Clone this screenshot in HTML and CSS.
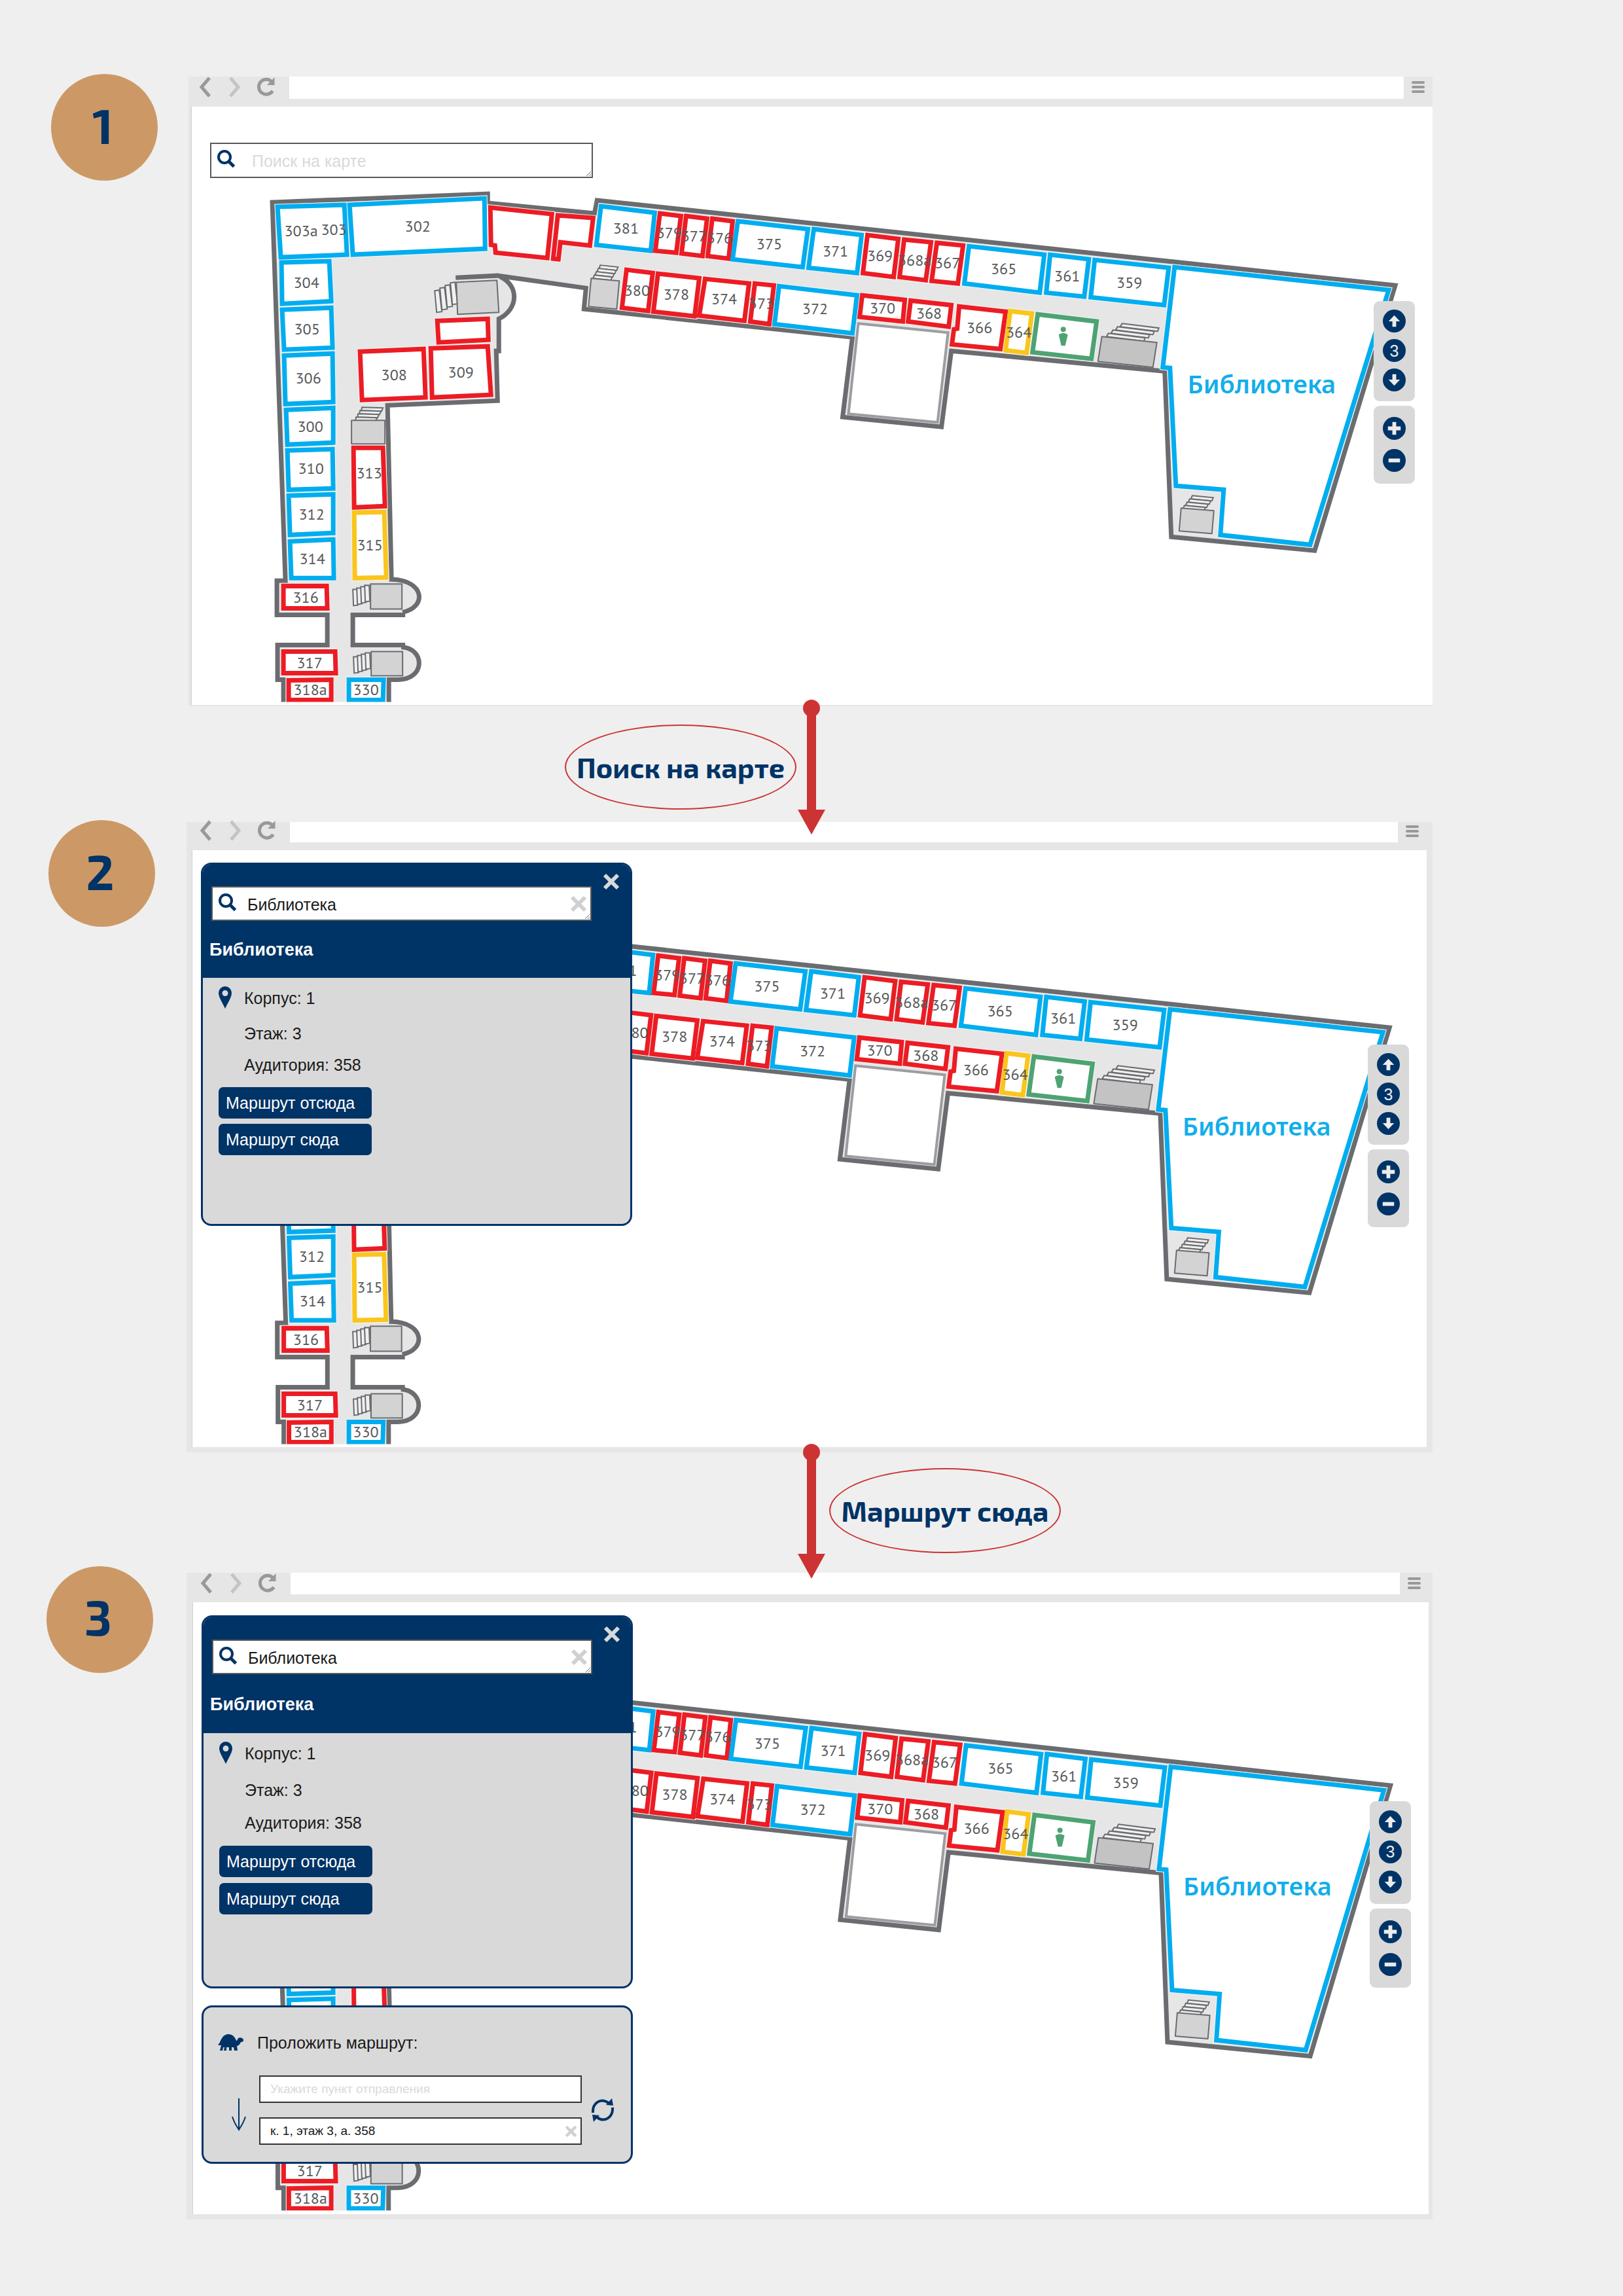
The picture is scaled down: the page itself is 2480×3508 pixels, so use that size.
FILE: index.html
```
<!DOCTYPE html>
<html lang="ru">
<head>
<meta charset="utf-8">
<meta name="viewport" content="width=device-width, initial-scale=1">
<title>Поиск на карте</title>
<link rel="stylesheet" href="styles.css">
</head>
<body>
<svg class="sprite" aria-hidden="true">
  <symbol id="i-back" viewBox="0 0 20 32"><path d="M17 2 L5 16 L17 30" fill="none" stroke="currentColor" stroke-width="5"/></symbol>
  <symbol id="i-next" viewBox="0 0 20 32"><path d="M3 2 L15 16 L3 30" fill="none" stroke="currentColor" stroke-width="5"/></symbol>
  <symbol id="i-reload" viewBox="0 0 30 32"><path d="M24.500 8 A11.500 11.500 0 1 0 25.500 22" fill="none" stroke="currentColor" stroke-width="5"/><path d="M28.500 1 V13 H17 Z" fill="currentColor"/></symbol>
  <symbol id="i-menu" viewBox="0 0 20 20"><path d="M2 3 H18 M2 10 H18 M2 17 H18" stroke="currentColor" stroke-width="4" stroke-linecap="round"/></symbol>
  <symbol id="i-search" viewBox="0 0 28 28"><circle cx="11" cy="11" r="9" fill="none" stroke="currentColor" stroke-width="4"/><path d="M17 17 L25.500 25.500" stroke="currentColor" stroke-width="5"/></symbol>
  <symbol id="i-cross" viewBox="0 0 26 26"><path d="M3 3 L23 23 M23 3 L3 23" stroke="currentColor" stroke-width="6"/></symbol>
  <symbol id="i-pin" viewBox="0 0 20 34"><path fill-rule="evenodd" fill="currentColor" d="M10 0 A10 10 0 0 1 20 10 C20 17 14 25 10 34 C6 25 0 17 0 10 A10 10 0 0 1 10 0 Z M10 6 A4.500 4.500 0 1 0 10 15 A4.500 4.500 0 1 0 10 6 Z"/></symbol>
  <symbol id="i-up" viewBox="0 0 36 36"><path fill="currentColor" d="M18 9 L27 18.500 H21 V27 H15 V18.500 H9 Z"/></symbol>
  <symbol id="i-down" viewBox="0 0 36 36"><path fill="currentColor" d="M18 27 L27 17.500 H21 V9 H15 V17.500 H9 Z"/></symbol>
  <symbol id="i-plus" viewBox="0 0 36 36"><path d="M8 18 H28 M18 8 V28" stroke="currentColor" stroke-width="6"/></symbol>
  <symbol id="i-minus" viewBox="0 0 36 36"><path d="M9 18 H27" stroke="currentColor" stroke-width="6"/></symbol>
  <symbol id="i-turtle" viewBox="0 0 40 26"><path fill="currentColor" d="M0 16 C3 14 3 11 5 8 C8 2 12 0 16 0 C22 0 26 4 28 10 C30 10 30 7 31 6 C34 4 39 6 39 9 C39 11 38 12 35 12 C34 15 31 18 29 18 L30 25 H25 L24 20 H21 L21 25 H17 L17 20 H13 L13 25 H9 L10 20 H8 L7 25 H3 L5 17 C3 17 1 17 0 16 Z"/></symbol>
  <symbol id="i-arrow" viewBox="0 0 24 50"><path d="M12 0 V47 M2 28 C5 38 9 43 12 48 C15 43 19 38 22 28" fill="none" stroke="currentColor" stroke-width="2"/></symbol>
  <symbol id="i-swap" viewBox="0 0 36 36"><path d="M3 22 C2 8 14 -2 27 7 M33 14 C34 28 22 38 9 29" fill="none" stroke="currentColor" stroke-width="4"/><path fill="currentColor" d="M32 0 L34 11 L23 10 Z M4 36 L2 25 L13 26 Z"/></symbol>
</svg>

<main class="board">
  <section class="step step-1">
    <div class="badge">1</div>
    <div class="browser">
      <div class="toolbar">
        <div class="nav-icons"><svg class="ico-nav"><use href="#i-back"/></svg><svg class="ico-nav dim"><use href="#i-next"/></svg><svg class="ico-reload"><use href="#i-reload"/></svg></div>
        <div class="address"></div>
        <svg class="ico-menu"><use href="#i-menu"/></svg>
      </div>
      <div class="screen">
        <svg class="map" data-map="1" viewBox="0 0 1895 914" role="img" aria-label="План третьего этажа"></svg>
        <div class="search search-free">
          <svg class="ico-search"><use href="#i-search"/></svg>
          <textarea class="search-field" rows="1" placeholder="Поиск на карте" aria-label="Поиск на карте"></textarea>
        </div>
        <div class="controls">
          <div class="control-group floors">
            <button class="round" aria-label="Этаж выше"><svg><use href="#i-up"/></svg></button>
            <button class="round">3</button>
            <button class="round" aria-label="Этаж ниже"><svg><use href="#i-down"/></svg></button>
          </div>
          <div class="control-group zoom">
            <button class="round" aria-label="Приблизить"><svg><use href="#i-plus"/></svg></button>
            <button class="round" aria-label="Отдалить"><svg><use href="#i-minus"/></svg></button>
          </div>
        </div>
      </div>
    </div>
  </section>

  <div class="link link-left">
    <p class="link-label">Поиск на карте</p>
    <svg class="link-arrow" viewBox="0 0 42 206"><circle cx="21" cy="13" r="13"/><path d="M14 13 H28 V168 H42 L21 206 L0 168 H14 Z"/></svg>
  </div>

  <section class="step step-2">
    <div class="badge">2</div>
    <div class="browser">
      <div class="toolbar">
        <div class="nav-icons"><svg class="ico-nav"><use href="#i-back"/></svg><svg class="ico-nav dim"><use href="#i-next"/></svg><svg class="ico-reload"><use href="#i-reload"/></svg></div>
        <div class="address"></div>
        <svg class="ico-menu"><use href="#i-menu"/></svg>
      </div>
      <div class="screen">
        <svg class="map" data-map="2" viewBox="0 0 1885 911" role="img" aria-label="План третьего этажа"></svg>
        <div class="panels">
          <div class="panel">
            <header class="panel-head">
              <button class="close" aria-label="Закрыть"><svg class="ico-cross"><use href="#i-cross"/></svg></button>
              <div class="search">
                <svg class="ico-search"><use href="#i-search"/></svg>
                <textarea class="search-field" rows="1" aria-label="Поиск на карте">Библиотека</textarea>
                <button class="clear" aria-label="Очистить"><svg class="ico-cross"><use href="#i-cross"/></svg></button>
              </div>
              <h2 class="panel-title">Библиотека</h2>
            </header>
            <div class="panel-body">
              <ul class="facts">
                <li><svg class="ico-pin"><use href="#i-pin"/></svg>Корпус: 1</li>
                <li>Этаж: 3</li>
                <li>Аудитория: 358</li>
              </ul>
              <button class="action">Маршрут отсюда</button>
              <button class="action">Маршрут сюда</button>
            </div>
          </div>
        </div>
        <div class="controls">
          <div class="control-group floors">
            <button class="round" aria-label="Этаж выше"><svg><use href="#i-up"/></svg></button>
            <button class="round">3</button>
            <button class="round" aria-label="Этаж ниже"><svg><use href="#i-down"/></svg></button>
          </div>
          <div class="control-group zoom">
            <button class="round" aria-label="Приблизить"><svg><use href="#i-plus"/></svg></button>
            <button class="round" aria-label="Отдалить"><svg><use href="#i-minus"/></svg></button>
          </div>
        </div>
      </div>
    </div>
  </section>

  <div class="link link-right">
    <p class="link-label">Маршрут сюда</p>
    <svg class="link-arrow" viewBox="0 0 42 206"><circle cx="21" cy="13" r="13"/><path d="M14 13 H28 V168 H42 L21 206 L0 168 H14 Z"/></svg>
  </div>

  <section class="step step-3">
    <div class="badge">3</div>
    <div class="browser">
      <div class="toolbar">
        <div class="nav-icons"><svg class="ico-nav"><use href="#i-back"/></svg><svg class="ico-nav dim"><use href="#i-next"/></svg><svg class="ico-reload"><use href="#i-reload"/></svg></div>
        <div class="address"></div>
        <svg class="ico-menu"><use href="#i-menu"/></svg>
      </div>
      <div class="screen">
        <svg class="map" data-map="3" viewBox="0 0 1888 935" role="img" aria-label="План третьего этажа"></svg>
        <div class="panels">
          <div class="panel">
            <header class="panel-head">
              <button class="close" aria-label="Закрыть"><svg class="ico-cross"><use href="#i-cross"/></svg></button>
              <div class="search">
                <svg class="ico-search"><use href="#i-search"/></svg>
                <textarea class="search-field" rows="1" aria-label="Поиск на карте">Библиотека</textarea>
                <button class="clear" aria-label="Очистить"><svg class="ico-cross"><use href="#i-cross"/></svg></button>
              </div>
              <h2 class="panel-title">Библиотека</h2>
            </header>
            <div class="panel-body">
              <ul class="facts">
                <li><svg class="ico-pin"><use href="#i-pin"/></svg>Корпус: 1</li>
                <li>Этаж: 3</li>
                <li>Аудитория: 358</li>
              </ul>
              <button class="action">Маршрут отсюда</button>
              <button class="action">Маршрут сюда</button>
            </div>
          </div>
          <form class="panel route">
            <h3 class="route-title"><svg class="ico-turtle"><use href="#i-turtle"/></svg>Проложить маршрут:</h3>
            <div class="route-grid">
              <svg class="ico-arrow"><use href="#i-arrow"/></svg>
              <div class="route-fields">
                <input class="route-input" type="text" placeholder="Укажите пункт отправления" aria-label="Пункт отправления">
                <div class="route-target">
                  <input class="route-input" type="text" value="к. 1, этаж 3, а. 358" aria-label="Пункт назначения">
                  <button type="button" class="clear" aria-label="Очистить"><svg class="ico-cross"><use href="#i-cross"/></svg></button>
                </div>
              </div>
              <button type="button" class="swap" aria-label="Поменять местами"><svg><use href="#i-swap"/></svg></button>
            </div>
          </form>
        </div>
        <div class="controls">
          <div class="control-group floors">
            <button class="round" aria-label="Этаж выше"><svg><use href="#i-up"/></svg></button>
            <button class="round">3</button>
            <button class="round" aria-label="Этаж ниже"><svg><use href="#i-down"/></svg></button>
          </div>
          <div class="control-group zoom">
            <button class="round" aria-label="Приблизить"><svg><use href="#i-plus"/></svg></button>
            <button class="round" aria-label="Отдалить"><svg><use href="#i-minus"/></svg></button>
          </div>
        </div>
      </div>
    </div>
  </section>
</main>
<script src="map.js"></script>
</body>
</html>
```
FILE: styles.css
```
* { box-sizing: border-box; }

:root {
  --navy: #003366;
  --panel: #d9d9d9;
  --chrome: #e6e6e6;
  --accent: #cc3333;
}

body {
  margin: 0;
  background: #efefef;
  font-family: "Liberation Sans", Arial, sans-serif;
  font-size: 25px;
  line-height: 28px;
  color: #1a1a1a;
}

button, input, textarea { font: inherit; color: inherit; margin: 0; padding: 0; border: 0; border-radius: 0; }
button { background: none; display: grid; place-items: center; cursor: pointer; }
svg { display: block; }
.sprite { display: none; }

.board { padding: 113px 291px 100px 0; }

/* Steps */
.step { display: grid; align-items: start; }
.step-1 { padding-left: 78px; grid-template-columns: 210px 1fr; }
.step-2 { padding-left: 74px; grid-template-columns: 211px 1fr; }
.step-3 { padding-left: 71px; grid-template-columns: 214px 1fr; }

.badge {
  width: 163px;
  height: 163px;
  padding: 0 5px 8px 0;
  border-radius: 50%;
  background: #cc9966;
  color: var(--navy);
  display: grid;
  place-items: center;
  font: 700 74px/80px "Exo 2", "Noto Sans", sans-serif;
}

.browser { background: var(--chrome); }
.step-1 .browser { margin-top: 4px; padding: 0 0 2px 5px; }
.step-2 .browser { margin-top: 3px; padding: 0 9px 8px 9px; }
.step-3 .browser { margin-top: 10px; padding: 0 6px 8px 10px; }

.toolbar { display: flex; height: 46px; color: #999; }
.step-2 .toolbar { height: 43px; }
.step-3 .toolbar { height: 45px; }
.nav-icons { width: 149px; display: flex; gap: 26px; padding-left: 10px; }
.ico-nav { width: 20px; height: 32px; }
.ico-nav.dim { color: #c4c4c4; }
.ico-reload { width: 30px; height: 32px; margin-left: -4px; }
.address { flex: 1; background: #fff; margin-bottom: 12px; }
.ico-menu { width: 20px; height: 20px; margin: 6px 12px 0 12px; }
.step-2 .nav-icons { margin-top: -3px; }
.step-2 .ico-menu { margin-top: 4px; }

.screen { position: relative; background: #fff; box-shadow: -1px 0 0 #d0d0d0; }
.map { width: 100%; height: auto; }

/* Floor plan */
.floor { fill: var(--chrome); stroke: none; }
.wall { fill: none; stroke: #6a6c70; stroke-width: 7; }
.court { fill: #fff; stroke: #9b9da0; stroke-width: 4; }
.room { fill: #fff; stroke-width: 7; }
.halo { fill: none; stroke: #f6f6f6; stroke-width: 9; }
.blue { stroke: #00adef; }
.red { stroke: #ec1c24; }
.yellow { stroke: #fac51c; }
.green { stroke: #4ea373; }
.stair { fill: #d3d3d3; stroke: #6a6c70; stroke-width: 2; stroke-linejoin: round; }
.stair.dark { fill: #c3c3c3; }
.tread { fill: #f0f0f0; stroke: #6a6c70; stroke-width: 2; }
.person { fill: #4ea373; }
.number { font: 24px "PT Sans", "Noto Sans", sans-serif; fill: #58595b; text-anchor: middle; }
.hall { font: 600 38px "Noto Sans", sans-serif; fill: #12aeea; text-anchor: middle; }

/* Search box */
.search { position: relative; width: 581px; height: 53px; }
.search-free { position: absolute; left: 28px; top: 55px; width: 585px; height: 54px; }
.search-field {
  display: block;
  width: 100%;
  height: 100%;
  padding: 12px 60px 8px 53px;
  border: 2px solid #58595b;
  background: #fff;
  overflow: hidden;
  white-space: nowrap;
  outline: 0;
}
.search-free .search-field { padding-left: 62px; }
.search-field::placeholder, .route-input::placeholder { color: #d9d9d9; opacity: 1; }
.ico-search { position: absolute; left: 11px; top: 11px; width: 28px; height: 28px; color: var(--navy); }
.ico-cross { width: 26px; height: 26px; }
.clear { position: absolute; right: 7px; top: 14px; color: #d0d0d0; }

/* Panels */
.panels { position: absolute; left: 13px; top: 19px; width: 659px; display: grid; gap: 26px; }
.panel { background: var(--panel); border: 3px solid var(--navy); border-radius: 16px; overflow: hidden; position: relative; }
.panel-head { background: var(--navy); color: #fff; height: 173px; padding: 33px 0 0 13px; }
.panel-head .search { color: #1a1a1a; }
.close { position: absolute; right: 16px; top: 13px; color: var(--panel); }
.panel-title { margin: 28px 0 0 -3px; font: 700 27px/32px "Liberation Sans", Arial, sans-serif; }
.panel-body { height: 376px; padding: 17px 24px 0; display: flex; flex-direction: column; align-items: flex-start; gap: 8px; }
.facts { list-style: none; margin: 0; padding: 0 0 0 39px; display: grid; grid-template-rows: 54px 48px 40px; position: relative; }
.ico-pin { position: absolute; left: 0; top: -4px; width: 20px; height: 34px; color: var(--navy); }
.action { width: 234px; height: 48px; border-radius: 7px; background: var(--navy); color: #fff; justify-items: start; padding-left: 11px; white-space: nowrap; }

.step-3 .panels { top: 20px; }
.step-3 .panel-head { height: 177px; padding-top: 34px; }
.step-3 .panel-title { margin-top: 30px; }
.step-3 .panel-body { height: 387px; gap: 9px; }
.step-3 .facts { grid-template-rows: 56px 50px 40px; }

/* Route form */
.route { padding: 40px 25px 26px 22px; }
.route-title { display: flex; align-items: center; gap: 20px; margin: 0 0 36px; font-weight: 400; font-size: 25px; line-height: 28px; }
.ico-turtle { width: 40px; height: 26px; }
.route-title svg, .route .ico-arrow, .swap { color: var(--navy); }
.route-grid { display: flex; align-items: center; gap: 14px; padding-left: 20px; }
.ico-arrow { width: 24px; height: 50px; margin: 14px 5px 0 0; }
.route-fields { flex: 1; display: grid; gap: 22px; }
.route-target { position: relative; }
.route-input { display: block; width: 100%; height: 42px; padding: 0 40px 0 15px; border: 2px solid #333; background: #fff; font-size: 19px; outline: 0; }
.route-target .clear { right: 7px; top: 12px; }
.route-target .ico-cross { width: 19px; height: 19px; }
.swap, .swap svg { width: 36px; height: 36px; }

/* Floor and zoom controls */
.controls { position: absolute; right: 27px; top: 297px; display: grid; gap: 7px; }
.step-3 .controls { top: 304px; }
.control-group { width: 63px; background: var(--panel); border-radius: 9px; display: flex; flex-direction: column; align-items: center; }
.floors { padding: 13px 0 15px; gap: 10px; }
.zoom { padding: 17px 0 18px; gap: 14px; }
.step-3 .floors { padding: 14px 0 16px; gap: 11px; }
.step-3 .zoom { padding: 18px 0; gap: 15px; }
.round { width: 35px; height: 35px; border-radius: 50%; background: var(--navy); color: #ececec; }
.round svg { width: 35px; height: 35px; }

/* Transitions between steps */
.link { position: relative; z-index: 1; height: 174px; margin-right: -291px; padding-top: 28px; display: grid; grid-template-columns: 1fr 1fr; align-items: start; }
.link-label {
  margin: 0;
  width: 354px;
  height: 130px;
  border: 2px solid var(--accent);
  border-radius: 50%;
  display: grid;
  place-items: center;
  color: var(--navy);
  white-space: nowrap;
  font: 700 43px/48px "Exo 2", "Noto Sans", sans-serif;
}
.link-left .link-label { justify-self: end; margin-right: 23px; }
.link-right { padding-top: 24px; }
.link-right .link-label { grid-column: 2; margin-left: 27px; }
.link-arrow { position: absolute; left: 50%; top: -10px; width: 42px; height: 206px; margin-left: -21px; fill: var(--accent); }
.link-right .link-arrow { top: -13px; }
```
FILE: map.js
```
// Floor plan geometry: every point is an x,y pair in plan units.
const walls = [
  'M433 1073 V1038 H424 V985 H500 V939 H423 V887 H436 L416 309 L745 296 V310 L908 326 L912 306 L2131 436 L2008 841 L1789 820 L1779 567 L1453 536 L1438 652 L1287 637 L1302 515 L892 472 L895 440 L760 421 L696 424',
  'M763 422 C794 436 792 472 762 487 V536 H758 L760 612 L592 619 L598 885 C650 886 652 928 615 935 M619 939 H539 V985 H619 M613 988 C650 990 650 1038 608 1038 H594 V1073'
];
const floor = 'M433 1073 V1038 H424 V985 H500 V939 H423 V887 H436 L416 309 L745 296 V310 L908 326 L912 306 L2131 436 L2008 841 L1789 820 L1779 567 L1453 536 L1438 652 L1287 637 L1302 515 L892 472 L895 440 L763 422 C794 436 792 472 762 487 V536 H758 L760 612 L592 619 L598 885 C650 886 652 928 615 935 V939 H539 V985 H613 V988 C650 990 650 1038 608 1038 H594 V1073 Z';
const court = '1311,494 1448,508 1432,645 1296,632';

const rooms = [
  ['blue', '424,316 526,313 530,389 429,393', ['303а', 460, 352], ['303', 510, 350]],
  ['blue', '534,313 740,303 741,380 539,389', ['302', 638, 345]],
  ['blue', '430,401 503,399 506,460 431,464', ['304', 468, 431]],
  ['blue', '431,473 506,470 508,531 434,534', ['305', 469, 502]],
  ['blue', '434,543 508,540 509,614 436,617', ['306', 471, 577]],
  ['blue', '437,626 509,623 509,676 439,679', ['300', 474, 651]],
  ['blue', '439,688 508,686 509,746 441,748', ['310', 475, 715]],
  ['blue', '441,757 509,755 509,814 443,817', ['312', 476, 785]],
  ['blue', '443,827 509,824 510,883 445,883', ['314', 477, 853]],
  ['red', '433,895 499,895 500,929 433,929', ['316', 467, 912]],
  ['red', '433,995 512,995 513,1028 433,1028', ['317', 473, 1012]],
  ['red', '441,1039 506,1038 506,1069 441,1069', ['318а', 474, 1053]],
  ['blue', '533,1038 586,1038 585,1069 533,1069', ['330', 559, 1053]],
  ['red', '749,317 843,327 836,394 757,386 756,375 750,374'],
  ['red', '852,329 906,333 901,375 856,370 853,396 845,395'],
  ['red', '668,490 745,487 746,519 670,523'],
  ['red', '550,537 647,533 650,607 553,611', ['308', 602, 572]],
  ['red', '658,532 745,529 750,603 660,607', ['309', 704, 568]],
  ['red', '540,684 585,684 588,773 541,775', ['313', 564, 722]],
  ['yellow', '541,783 587,782 590,882 542,883', ['315', 565, 832]],
  ['blue', '918,315 1000,325 994,383 911,374', ['381', 956, 348]],
  ['red', '1008,326 1040,330 1033,386 1001,383', ['379', 1022, 355]],
  ['red', '1048,330 1080,334 1073,391 1041,387', ['377', 1060, 360]],
  ['red', '1088,334 1119,338 1113,395 1081,391', ['376', 1099, 363]],
  ['blue', '1127,338 1234,350 1226,408 1119,396', ['375', 1175, 372]],
  ['blue', '1243,350 1316,359 1309,417 1235,409', ['371', 1276, 383]],
  ['red', '1325,359 1372,365 1365,423 1318,417', ['369', 1344, 390]],
  ['red', '1381,366 1422,370 1414,428 1374,423', ['368а', 1397, 397]],
  ['red', '1431,371 1471,375 1463,433 1423,429', ['367', 1447, 401]],
  ['blue', '1480,376 1595,389 1588,447 1473,433', ['365', 1533, 410]],
  ['blue', '1604,389 1663,396 1656,453 1598,447', ['361', 1630, 421]],
  ['blue', '1672,397 1785,409 1778,466 1666,454', ['359', 1725, 431]],
  ['red', '957,412 997,417 990,475 950,470', ['380', 973, 443]],
  ['red', '1005,418 1068,425 1061,483 998,476', ['378', 1033, 449]],
  ['red', '1077,426 1144,433 1137,490 1068,482', ['374', 1106, 456]],
  ['red', '1153,433 1182,436 1175,495 1146,491', ['373', 1163, 463]],
  ['blue', '1190,437 1309,451 1302,509 1183,495', ['372', 1245, 471]],
  ['red', '1317,451 1382,458 1379,491 1313,484', ['370', 1348, 470]],
  ['red', '1391,459 1453,466 1449,499 1387,491', ['368', 1419, 478]],
  ['red', '1465,468 1536,476 1528,533 1454,526 1457,503 1462,502', ['366', 1496, 500]],
  ['yellow', '1543,475 1576,479 1568,539 1536,535', ['364', 1556, 507]],
  ['green', '1585,480 1675,491 1667,548 1577,538'],
  ['blue', '1794,408 2121,443 2001,832 1864,817 1869,748 1796,742 1787,562 1776,561']
];

// Landing, first tread, offset between treads.
const stairs = [
  ['697,431 759,428 762,477 699,480', '664,444 671,443 675,476 667,477', 8, -4],
  ['903,425 946,429 942,472 899,468', '917,405 944,408 942,413 915,410', -3, 5],
  ['537,642 588,642 588,678 537,678', '553,622 585,623 583,628 552,627', -3, 5],
  ['566,892 614,892 614,930 566,930', '539,900 546,900 547,924 540,925', 6, -2],
  ['567,995 615,995 615,1032 567,1032', '540,1003 547,1003 548,1027 541,1028', 6, -2],
  ['1683,514 1767,523 1761,561 1677,552', '1714,494 1770,501 1768,506 1711,499', -7, 5, 'dark'],
  ['1804,776 1854,780 1851,815 1801,811', '1821,757 1853,760 1851,765 1819,762', -4, 5]
];

// Where each screen looks at the plan, and how far down its side panels reach.
const views = {
  1: { at: (x, y) => [x - 293, y - 163], covered: 0 },
  2: { at: (x, y) => [530 + (x - 530) * 0.9945 - 294, y - 165], covered: 739 },
  3: { at: (x, y) => [530 + (x - 530) * 0.996 - 295, 911 + (y - 1054) * 1.021], covered: 1000 }
};
const panelEdge = 940;
const baselineShift = 9;

function draw(svg) {
  const { at: view, covered } = views[svg.dataset.map];
  const add = (tag, attrs, text) => {
    const el = document.createElementNS('http://www.w3.org/2000/svg', tag);
    for (const key in attrs) el.setAttribute(key, attrs[key]);
    if (text) el.textContent = text;
    svg.appendChild(el);
  };
  const pts = (list, dx = 0, dy = 0) => list.split(' ').map(p => {
    const [x, y] = p.split(',').map(Number);
    return view(x + dx, y + dy).join(',');
  }).join(' ');
  const path = d => {
    let x = 0, y = 0;
    return d.replace(/([MLHVC])([^MLHVCZ]*)/g, (m, cmd, rest) => {
      const n = rest.trim().split(/\s+/).map(Number);
      if (cmd === 'H') { x = n[0]; return 'L' + view(x, y).join(' '); }
      if (cmd === 'V') { y = n[0]; return 'L' + view(x, y).join(' '); }
      const out = [];
      for (let i = 0; i < n.length; i += 2) {
        x = n[i]; y = n[i + 1];
        out.push(view(x, y).join(' '));
      }
      return cmd + out.join(' ');
    });
  };

  add('path', { class: 'floor', d: path(floor) });
  walls.forEach(d => add('path', { class: 'wall', d: path(d) }));
  add('polygon', { class: 'court', points: pts(court) });
  stairs.forEach(([landing, tread, dx, dy, tone = '']) => {
    for (let i = 0; i < 4; i++) add('polygon', { class: 'tread', points: pts(tread, dx * i, dy * i) });
    add('polygon', { class: 'stair ' + tone, points: pts(landing) });
  });
  rooms.forEach(([, shape]) => add('polygon', { class: 'halo', points: pts(shape) }));
  rooms.forEach(([kind, shape]) => add('polygon', { class: 'room ' + kind, points: pts(shape) }));
  rooms.forEach(([, , ...labels]) => labels.forEach(([text, x, y]) => {
    if (x < panelEdge && y < covered) return;
    const [lx, ly] = view(x, y);
    add('text', { class: 'number', x: lx, y: ly + baselineShift }, text);
  }));
  const [px, py] = view(1624, 503);
  add('circle', { class: 'person', cx: px, cy: py, r: 4 });
  add('path', { class: 'person', d: `M${px - 7} ${py + 8} Q${px} ${py + 3} ${px + 7} ${py + 8} L${px + 3} ${py + 25} H${px - 3} Z` });
  const [hx, hy] = view(1927, 588);
  add('text', { class: 'hall', x: hx, y: hy + 13 }, 'Библиотека');
  // The plan stops a few pixels above the bottom edge of the screen.
  const [, cut] = view(0, 1072);
  add('rect', { x: 0, y: cut, width: 1900, height: 30, fill: '#fff' });
}

document.querySelectorAll('.map').forEach(draw);
```
